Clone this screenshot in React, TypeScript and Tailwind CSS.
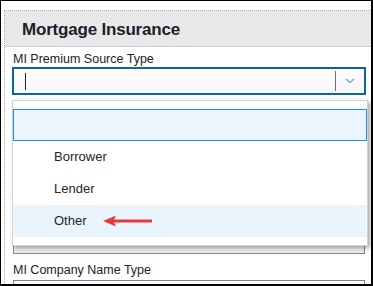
import React from "react";

export default function App() {
  const font = { fontFamily: '"Liberation Sans", Arial, sans-serif' };
  return (
    <div
      className="relative w-[373px] h-[286px] overflow-hidden bg-white border-l border-t border-r-2 border-b-2 border-black"
      style={font}
    >
      <div className="ml-[3px] mt-[9px] h-[300px] border-l border-t border-dotted border-[#a9a9a9]">
        <div className="h-[36px] bg-[#e8e8e8] border-b border-[#c9c9d3] flex items-center pl-[17px] pt-[3px]">
          <span className="text-[17px] font-bold text-[#1d1d2b] tracking-[-0.2px]">Mortgage Insurance</span>
        </div>
        <div className="pl-[7px] pr-[5px]">
          <div className="pl-[1px] mt-[4px] h-[16px] text-[12.5px] leading-[16px] text-[#222]">MI Premium Source Type</div>
          <div className="w-[354px] h-[28px] border-2 border-[#0b64a3] bg-gradient-to-b from-white to-[#f6f6f6] flex items-center">
            <div className="ml-[11px] w-[1px] h-[17px] bg-[#222]" />
            <div className="flex-1" />
            <div className="w-[1px] h-[20px] bg-[#6f6f6f]" />
            <div className="w-[28px] flex justify-center">
              <svg width="10" height="6" viewBox="0 0 10 6">
                <path d="M1 1 L5 4.5 L9 1" fill="none" stroke="#5d9fd6" strokeWidth="1.2" />
              </svg>
            </div>
          </div>
          <div className="mt-[131px] ml-[1px] w-[352px] h-[28px] border border-[#7d8498] bg-gradient-to-b from-white to-[#e9e9e9]" />
          <div className="pl-[1px] mt-[8px] h-[16px] text-[12.5px] leading-[16px] text-[#222]">MI Company Name Type</div>
          <div className="mt-[2px] ml-[1px] w-[352px] h-[28px] border border-[#7d8498] bg-gradient-to-b from-white to-[#f0f0f0] flex items-start">
            <div className="flex-1" />
            <div className="mt-[3px] mr-[27px] w-[1px] h-[20px] bg-[#6f6f6f]" />
          </div>
        </div>
      </div>

      <div className="absolute left-[11px] top-[99px] w-[356px] h-[146px] bg-white border border-[#d4d4d4] shadow-[2px_2px_4px_rgba(0,0,0,0.35)] pt-[8px]">
        <div className="h-[32px] bg-[#eaf5fe] border border-[#1b8fe2]" />
        <div className="h-[32px] flex items-center pl-[41px] text-[13px] text-[#262626]">Borrower</div>
        <div className="h-[32px] flex items-center pl-[41px] text-[13px] text-[#262626]">Lender</div>
        <div className="h-[32px] flex items-center pl-[41px] text-[13px] text-[#262626] bg-[#e9f4fd]">
          <span>Other</span>
          <svg className="ml-[16px]" width="50" height="12" viewBox="0 0 50 12">
            <path d="M0 6 L13 0.5 L11 4.5 L49 4.5 L49 7.5 L11 7.5 L13 11.5 Z" fill="#e8383d" />
          </svg>
        </div>
      </div>
    </div>
  );
}
